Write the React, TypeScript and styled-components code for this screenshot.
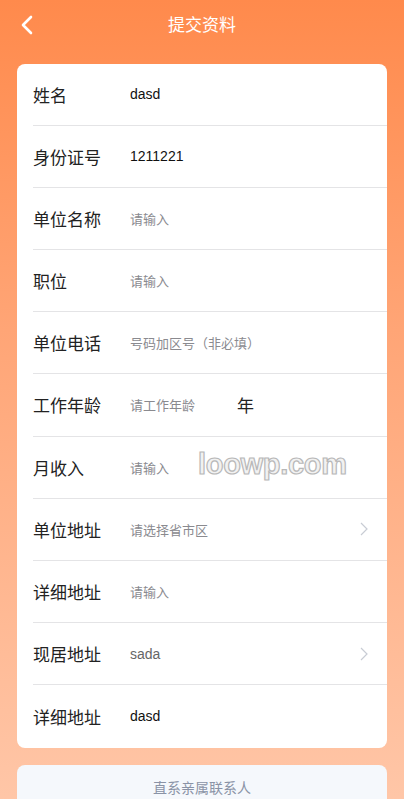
import { createGlobalStyle } from "styled-components";
import styled from "styled-components";

const GlobalStyle = createGlobalStyle`
  html, body {
    margin: 0;
    padding: 0;
  }
  body {
    font-family: "Liberation Sans", "Noto Sans CJK SC", sans-serif;
    background: #ffc8aa;
  }
  input::placeholder {
    color: #8a8a8f;
  }
`;

interface Field {
  label: string;
  value?: string;
  placeholder?: string;
  suffix?: string;
  arrow?: boolean;
}

const fields: Field[] = [
  { label: "姓名", value: "dasd" },
  { label: "身份证号", value: "1211221" },
  { label: "单位名称", placeholder: "请输入" },
  { label: "职位", placeholder: "请输入" },
  { label: "单位电话", placeholder: "号码加区号（非必填）" },
  { label: "工作年龄", placeholder: "请工作年龄", suffix: "年" },
  { label: "月收入", placeholder: "请输入" },
  { label: "单位地址", placeholder: "请选择省市区", arrow: true },
  { label: "详细地址", placeholder: "请输入" },
  { label: "现居地址", value: "sada", arrow: true },
  { label: "详细地址", value: "dasd" },
];

const BackIcon = () => (
  <svg width="14" height="20" viewBox="0 0 14 20">
    <path d="M11 2 L3 10 L11 18" fill="none" stroke="#fff" strokeWidth="2.6" strokeLinecap="round" strokeLinejoin="round" />
  </svg>
);

const Chevron = () => (
  <svg width="10" height="16" viewBox="0 0 10 16">
    <path d="M2 2 L8 8 L2 14" fill="none" stroke="#c8ccd4" strokeWidth="1.2" />
  </svg>
);

const App = () => (
  <Page>
    <GlobalStyle />
    <Header>
      <BackButton>
        <BackIcon />
      </BackButton>
      <Title>提交资料</Title>
    </Header>
    <Card>
      {fields.map((f, i) => (
        <Row key={i}>
          <Label>{f.label}</Label>
          {f.value ? (
            <Value $gray={!!f.arrow}>{f.value}</Value>
          ) : (
            <Input placeholder={f.placeholder} $narrow={!!f.suffix} readOnly />
          )}
          {f.suffix && <Suffix>{f.suffix}</Suffix>}
          {f.arrow && (
            <ArrowBox>
              <Chevron />
            </ArrowBox>
          )}
        </Row>
      ))}
      <Watermark>loowp.com</Watermark>
    </Card>
    <SubCard>直系亲属联系人</SubCard>
  </Page>
);
export default App;

const Page = styled.div`
  min-height: 799px;
  background: linear-gradient(180deg, #ff8a4c 0%, #ffa576 40%, #ffc8aa 100%);
  padding: 0 17px;
  box-sizing: border-box;
  overflow: hidden;
`;

const Header = styled.div`
  height: 50px;
  display: flex;
  align-items: center;
  justify-content: center;
  position: relative;
`;

const BackButton = styled.div`
  position: absolute;
  left: 3px;
  top: 15px;
  display: flex;
`;

const Title = styled.div`
  color: #fff;
  font-size: 17px;
  font-family: "Noto Sans CJK SC", sans-serif;
  margin-top: -3px;
`;

const Card = styled.div`
  margin-top: 14px;
  background: #fff;
  border-radius: 8px;
  overflow: hidden;
  position: relative;
`;

const Row = styled.div`
  height: 62.22px;
  box-sizing: border-box;
  margin-left: 16px;
  border-bottom: 1px solid #e4e4e6;
  display: flex;
  align-items: center;
  &:first-child {
    height: 61.5px;
  }
  &:nth-last-child(2) {
    border-bottom-color: transparent;
  }
`;

const Label = styled.div`
  width: 97px;
  flex-shrink: 0;
  font-size: 17px;
  color: #222;
  font-family: "Noto Sans CJK SC", sans-serif;
`;

const Value = styled.div<{ $gray: boolean }>`
  flex: 1;
  font-size: 14px;
  color: ${({ $gray }) => ($gray ? "#666" : "#111")};
`;

const Input = styled.input<{ $narrow: boolean }>`
  border: none;
  outline: none;
  padding: 0;
  background: transparent;
  font-size: 13px;
  font-family: "Noto Sans CJK SC", sans-serif;
  color: #333;
  ${({ $narrow }) => ($narrow ? "width: 107px; flex: none;" : "flex: 1; min-width: 0;")}
`;

const Suffix = styled.div`
  flex: 1;
  font-size: 17px;
  color: #222;
  font-family: "Noto Sans CJK SC", sans-serif;
`;

const ArrowBox = styled.div`
  width: 28px;
  flex-shrink: 0;
  display: flex;
  align-items: center;
`;

const Watermark = styled.div`
  position: absolute;
  left: 181px;
  top: 384px;
  font-size: 29px;
  font-weight: bold;
  font-family: "Liberation Sans", sans-serif;
  letter-spacing: -0.3px;
  color: #f2f2f2;
  -webkit-text-stroke: 1.2px #b8b8b8;
  pointer-events: none;
`;

const SubCard = styled.div`
  margin-top: 17px;
  height: 60px;
  padding-top: 12px;
  box-sizing: border-box;
  background: #f5f8fc;
  border-radius: 8px 8px 0 0;
  text-align: center;
  font-size: 14px;
  color: #8a93a6;
  font-family: "Noto Sans CJK SC", sans-serif;
`;
